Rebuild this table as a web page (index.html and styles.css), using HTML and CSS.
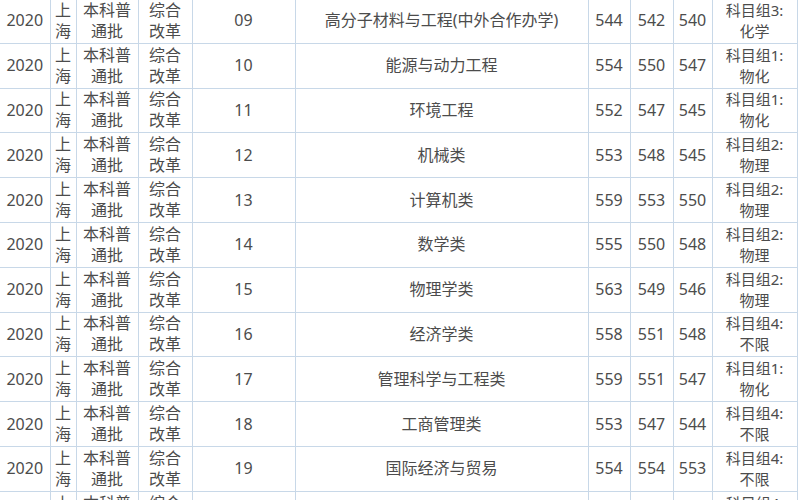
FILE: index.html
```html
<!DOCTYPE html>
<html lang="zh">
<head>
<meta charset="utf-8">
<link rel="stylesheet" href="styles.css">
</head>
<body>
<table class="score-table">
  <colgroup>
    <col class="c-year"><col class="c-prov"><col class="c-batch"><col class="c-type"><col class="c-code"><col class="c-major"><col class="c-num"><col class="c-num2"><col class="c-num3"><col class="c-subj">
  </colgroup>
  <tbody>
    <tr><td>2020</td><td>上<br>海</td><td>本科普<br>通批</td><td>综合<br>改革</td><td>09</td><td>高分子材料与工程(中外合作办学)</td><td>544</td><td>542</td><td>540</td><td class="subj">科目组3:<br>化学</td></tr>
    <tr><td>2020</td><td>上<br>海</td><td>本科普<br>通批</td><td>综合<br>改革</td><td>10</td><td>能源与动力工程</td><td>554</td><td>550</td><td>547</td><td class="subj">科目组1:<br>物化</td></tr>
    <tr><td>2020</td><td>上<br>海</td><td>本科普<br>通批</td><td>综合<br>改革</td><td>11</td><td>环境工程</td><td>552</td><td>547</td><td>545</td><td class="subj">科目组1:<br>物化</td></tr>
    <tr><td>2020</td><td>上<br>海</td><td>本科普<br>通批</td><td>综合<br>改革</td><td>12</td><td>机械类</td><td>553</td><td>548</td><td>545</td><td class="subj">科目组2:<br>物理</td></tr>
    <tr><td>2020</td><td>上<br>海</td><td>本科普<br>通批</td><td>综合<br>改革</td><td>13</td><td>计算机类</td><td>559</td><td>553</td><td>550</td><td class="subj">科目组2:<br>物理</td></tr>
    <tr><td>2020</td><td>上<br>海</td><td>本科普<br>通批</td><td>综合<br>改革</td><td>14</td><td>数学类</td><td>555</td><td>550</td><td>548</td><td class="subj">科目组2:<br>物理</td></tr>
    <tr><td>2020</td><td>上<br>海</td><td>本科普<br>通批</td><td>综合<br>改革</td><td>15</td><td>物理学类</td><td>563</td><td>549</td><td>546</td><td class="subj">科目组2:<br>物理</td></tr>
    <tr><td>2020</td><td>上<br>海</td><td>本科普<br>通批</td><td>综合<br>改革</td><td>16</td><td>经济学类</td><td>558</td><td>551</td><td>548</td><td class="subj">科目组4:<br>不限</td></tr>
    <tr><td>2020</td><td>上<br>海</td><td>本科普<br>通批</td><td>综合<br>改革</td><td>17</td><td>管理科学与工程类</td><td>559</td><td>551</td><td>547</td><td class="subj">科目组1:<br>物化</td></tr>
    <tr><td>2020</td><td>上<br>海</td><td>本科普<br>通批</td><td>综合<br>改革</td><td>18</td><td>工商管理类</td><td>553</td><td>547</td><td>544</td><td class="subj">科目组4:<br>不限</td></tr>
    <tr><td>2020</td><td>上<br>海</td><td>本科普<br>通批</td><td>综合<br>改革</td><td>19</td><td>国际经济与贸易</td><td>554</td><td>554</td><td>553</td><td class="subj">科目组4:<br>不限</td></tr>
    <tr><td>2020</td><td>上<br>海</td><td>本科普<br>通批</td><td>综合<br>改革</td><td>20</td><td>会计学</td><td>556</td><td>552</td><td>549</td><td class="subj">科目组4:<br>不限</td></tr>
  </tbody>
</table>
</body>
</html>
```

FILE: styles.css
```css
html, body {
  margin: 0;
  padding: 0;
  background: #ffffff;
  overflow: hidden;
}

.score-table {
  margin-top: -2px;
  width: 797px;
  table-layout: fixed;
  border-collapse: collapse;
  font-family: "Noto Sans", "Noto Sans CJK SC", sans-serif;
  font-size: 16px;
  line-height: 21px;
  color: #4c4c4c;
}

.c-year { width: 50px; }
.c-prov { width: 26px; }
.c-batch { width: 62px; }
.c-type { width: 54px; }
.c-code { width: 103px; }
.c-major { width: 293px; }
.c-num { width: 42px; }
.c-num2 { width: 43px; }
.c-num3 { width: 39px; }
.c-subj { width: 85px; }

.score-table tr {
  height: 44.8px;
}

.score-table td {
  padding: 0;
  text-align: center;
  vertical-align: middle;
  white-space: nowrap;
  border: 1px solid #c8d8e8;
  overflow: hidden;
}

.score-table td:first-child {
  border-left: none;
}

.score-table td.subj {
  font-size: 15px;
}
```
